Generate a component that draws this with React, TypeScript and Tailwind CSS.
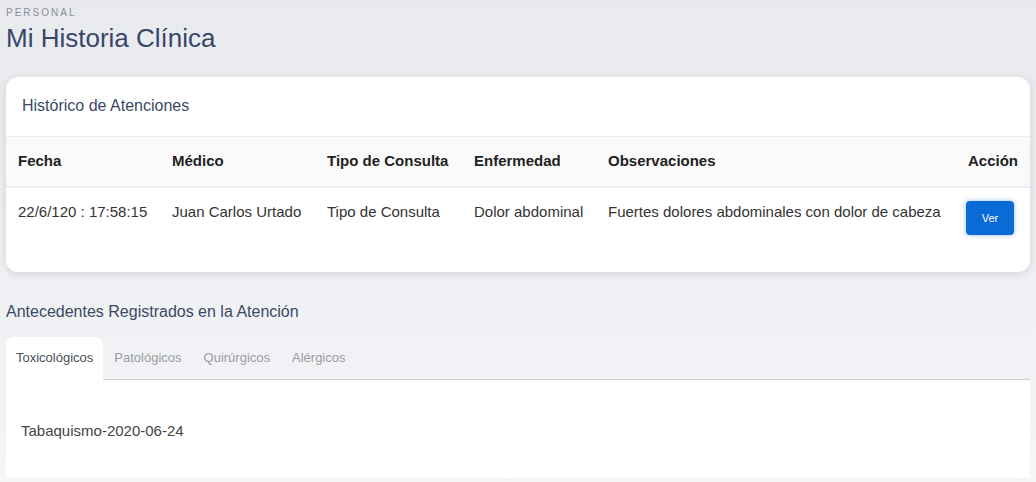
import { useState } from "react";

const COLUMNS = [
  { label: "Fecha", w: "w-[154px]" },
  { label: "Médico", w: "w-[155px]" },
  { label: "Tipo de Consulta", w: "w-[147px]" },
  { label: "Enfermedad", w: "w-[134px]" },
  { label: "Observaciones", w: "w-[359px]" },
];

const ROWS = [
  {
    fecha: "22/6/120 : 17:58:15",
    medico: "Juan Carlos Urtado",
    tipo: "Tipo de Consulta",
    enfermedad: "Dolor abdominal",
    obs: "Fuertes dolores abdominales con dolor de cabeza",
  },
];

const TABS = ["Toxicológicos", "Patológicos", "Quirúrgicos", "Alérgicos"];

const TAB_CONTENT: Record<string, string> = {
  "Toxicológicos": "Tabaquismo-2020-06-24",
  "Patológicos": "",
  "Quirúrgicos": "",
  "Alérgicos": "",
};

export default function App() {
  const [tab, setTab] = useState("Toxicológicos");

  return (
    <div className="min-h-[482px] bg-gradient-to-b from-[#e9eaee] to-[#f4f5f7] px-[6px] pt-[7px] pb-[4px] font-['Liberation_Sans',Arial,sans-serif]">
      {/* Page header */}
      <div className="text-[10px] leading-[12px] tracking-[2px] text-[#8b9099]">PERSONAL</div>
      <h1 className="mt-[4px] text-[26px] leading-[30px] text-[#36476a]">Mi Historia Clínica</h1>

      {/* Historico card */}
      <div className="mt-[24px] rounded-[12px] bg-white pb-[25px] shadow-[0_2px_10px_rgba(0,0,0,0.12)]">
        <div className="border-b border-[#ececee] px-[16px] pt-[19px] pb-[20px] text-[16px] leading-[20px] text-[#3b4a64]">
          Histórico de Atenciones
        </div>
        <table className="w-full border-collapse text-[15px]">
          <thead>
            <tr className="border-b-2 border-[#eeeef0] bg-[#fafafa]">
              {COLUMNS.map((c) => (
                <th
                  key={c.label}
                  className={`${c.w} h-[50px] px-[12px] text-left font-bold text-[#222]`}
                >
                  {c.label}
                </th>
              ))}
              <th className="h-[50px] px-[12px] text-right font-bold text-[#222]">Acción</th>
            </tr>
          </thead>
          <tbody>
            {ROWS.map((r, i) => (
              <tr key={i} className="align-top text-[#333]">
                <td className="px-[12px] pt-[13px] pb-[12px] leading-[22px]">{r.fecha}</td>
                <td className="px-[12px] pt-[13px] pb-[12px] leading-[22px]">{r.medico}</td>
                <td className="px-[12px] pt-[13px] pb-[12px] leading-[22px]">{r.tipo}</td>
                <td className="px-[12px] pt-[13px] pb-[12px] leading-[22px]">{r.enfermedad}</td>
                <td className="px-[12px] pt-[13px] pb-[12px] leading-[22px]">{r.obs}</td>
                <td className="pt-[13px] pr-[16px] pb-[12px] text-right">
                  <button
                    type="button"
                    className="h-[34px] w-[48px] rounded-[4px] bg-[#0a6bd6] text-[11px] text-white shadow-[0_0_5px_rgba(10,107,214,0.45)]"
                  >
                    Ver
                  </button>
                </td>
              </tr>
            ))}
          </tbody>
        </table>
      </div>

      {/* Antecedentes */}
      <h2 className="mt-[30px] text-[16px] leading-[20px] text-[#3b4a64]">
        Antecedentes Registrados en la Atención
      </h2>
      <div className="mt-[15px]">
        <div className="flex border-b border-[#cfd0d4]">
          {TABS.map((t) => {
            const active = t === tab;
            return (
              <button
                key={t}
                type="button"
                onClick={() => setTab(t)}
                className={`-mb-px h-[43px] pb-[2px] text-[13px] ${
                  active
                    ? "rounded-t-[8px] bg-white pl-[10px] pr-[10px] text-[#4a4f58]"
                    : "px-[11px] text-[#9a9ca2]"
                }`}
              >
                {t}
              </button>
            );
          })}
        </div>
        <div className="h-[98px] bg-white px-[15px] pt-[40px] text-[15px] leading-[22px] text-[#444]">
          {TAB_CONTENT[tab]}
        </div>
      </div>
    </div>
  );
}
